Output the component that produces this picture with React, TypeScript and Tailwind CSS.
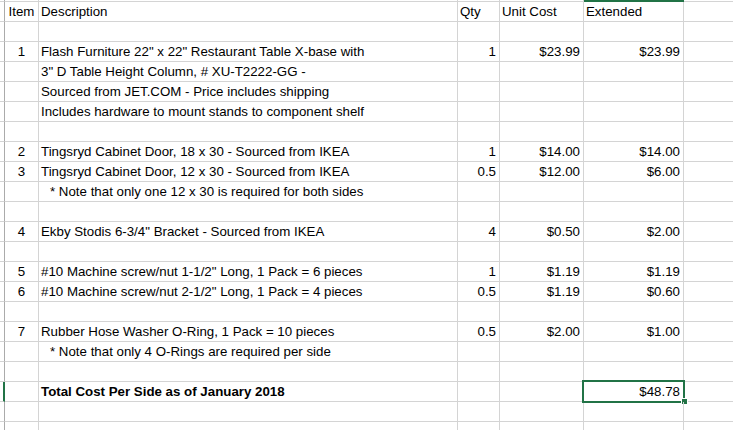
type Row = {
  item?: string;
  desc?: string;
  qty?: string;
  unit?: string;
  ext?: string;
  note?: boolean;
  header?: boolean;
  total?: boolean;
};

const rows: Row[] = [
  { item: "Item", desc: "Description", qty: "Qty", unit: "Unit Cost", ext: "Extended", header: true },
  {},
  { item: "1", desc: 'Flash Furniture 22" x 22" Restaurant Table X-base with', qty: "1", unit: "$23.99", ext: "$23.99" },
  { desc: '3" D Table Height Column, # XU-T2222-GG -' },
  { desc: "Sourced from JET.COM - Price includes shipping" },
  { desc: "Includes hardware to mount stands to component shelf" },
  {},
  { item: "2", desc: "Tingsryd Cabinet Door, 18 x 30 - Sourced from IKEA", qty: "1", unit: "$14.00", ext: "$14.00" },
  { item: "3", desc: "Tingsryd Cabinet Door, 12 x 30 - Sourced from IKEA", qty: "0.5", unit: "$12.00", ext: "$6.00" },
  { desc: "* Note that only one 12 x 30 is required for both sides", note: true },
  {},
  { item: "4", desc: 'Ekby Stodis 6-3/4" Bracket - Sourced from IKEA', qty: "4", unit: "$0.50", ext: "$2.00" },
  {},
  { item: "5", desc: '#10 Machine screw/nut 1-1/2" Long, 1 Pack = 6 pieces', qty: "1", unit: "$1.19", ext: "$1.19" },
  { item: "6", desc: '#10 Machine screw/nut 2-1/2" Long, 1 Pack = 4 pieces', qty: "0.5", unit: "$1.19", ext: "$0.60" },
  {},
  { item: "7", desc: "Rubber Hose Washer O-Ring, 1 Pack = 10 pieces", qty: "0.5", unit: "$2.00", ext: "$1.00" },
  { desc: "* Note that only 4 O-Rings are required per side", note: true },
  {},
  { desc: "Total Cost Per Side as of January 2018", ext: "$48.78", total: true },
  {},
  {},
];

const cell = "h-full shrink-0 border-b border-r border-[#d4d4d4] overflow-visible whitespace-nowrap";

function SheetRow({ row }: { row: Row }) {
  const num = row.header ? "text-left pl-[2px]" : "text-right pr-[3px]";
  return (
    <div className="flex h-5 leading-[19px]">
      <div
        className={
          "h-full w-[5px] shrink-0 border-b border-b-[#d4d4d4] " +
          (row.total ? "border-r-2 border-r-[#217346]" : "border-r border-r-[#ababab]")
        }
      />
      <div className={cell + " w-[34px] text-center"}>{row.item}</div>
      <div className={cell + " w-[419px] " + (row.note ? "pl-[11px]" : "pl-[2px]") + (row.total ? " font-bold" : "")}>
        {row.desc}
      </div>
      <div className={cell + " w-[42px] " + num}>{row.qty}</div>
      <div className={cell + " w-[84px] " + num}>{row.unit}</div>
      <div className={cell + " relative w-[100px] " + num}>
        {row.ext}
        {row.total && (
          <>
            <div className="absolute -left-[2px] -top-[2px] h-[23px] w-[103px] border-2 border-[#217346]" />
            <div className="absolute left-[97px] top-[16px] size-[7px] border border-white bg-[#217346]" />
          </>
        )}
      </div>
      <div className="h-full flex-1 border-b border-[#d4d4d4]" />
    </div>
  );
}

export default function App() {
  return (
    <div className="h-[430px] w-[733px] overflow-hidden bg-white font-['Liberation_Sans',Arial,sans-serif] text-[13.3px] text-black">
      <div className="flex h-[2px]">
        <div className="h-full w-[5px] shrink-0 border-b border-r border-b-[#d4d4d4] border-r-[#ababab]" />
        <div className="h-full w-[34px] shrink-0 border-b border-r border-[#d4d4d4]" />
        <div className="h-full w-[419px] shrink-0 border-b border-r border-[#d4d4d4]" />
        <div className="h-full w-[42px] shrink-0 border-b border-r border-[#d4d4d4]" />
        <div className="h-full w-[84px] shrink-0 border-b border-r border-[#d4d4d4]" />
        <div className="h-full w-[100px] shrink-0 bg-[#217346]" />
        <div className="h-full flex-1 border-b border-[#d4d4d4]" />
      </div>
      {rows.map((row, i) => (
        <SheetRow key={i} row={row} />
      ))}
    </div>
  );
}
